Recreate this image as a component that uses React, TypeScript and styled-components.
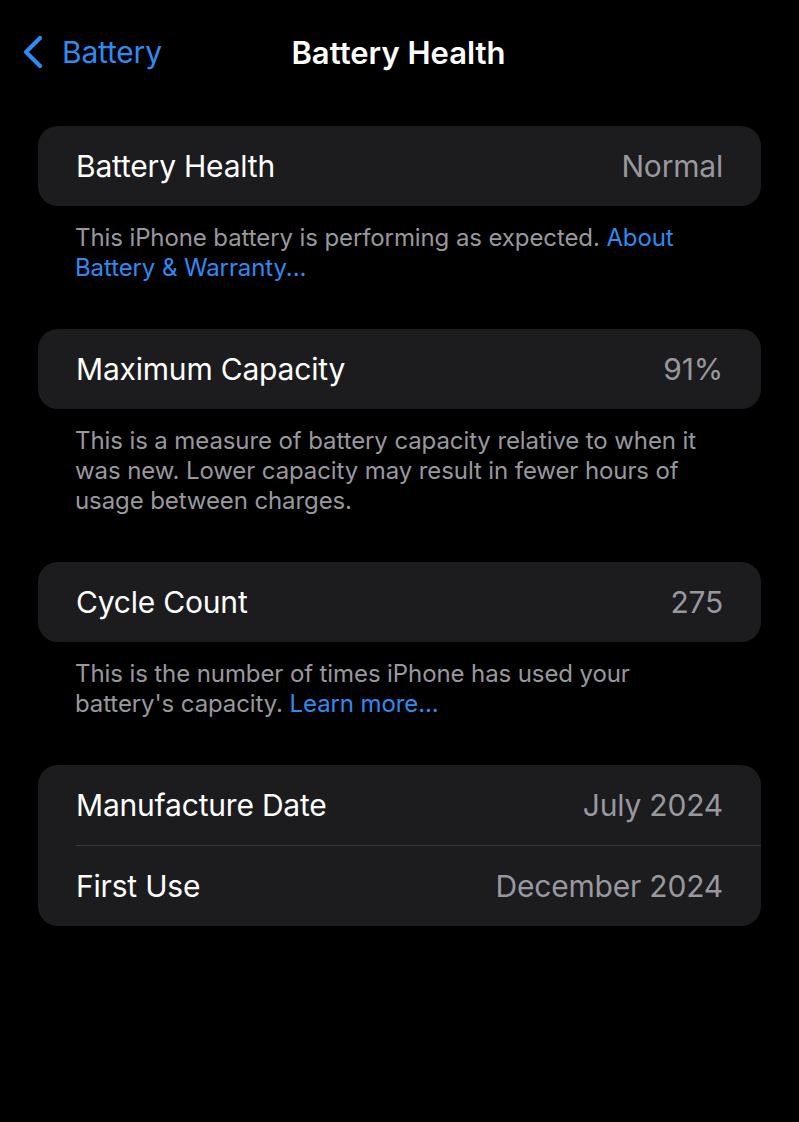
import styled, { createGlobalStyle } from 'styled-components';

const GlobalStyle = createGlobalStyle`
  html, body {
    margin: 0;
    padding: 0;
    background: #000;
  }
  body {
    font-family: Inter, "Noto Sans", "Liberation Sans", sans-serif;
    -webkit-font-smoothing: antialiased;
  }
`;

const Page = styled.div`
  background: #000;
  min-height: 1122px;
  box-sizing: border-box;
  padding: 0 38px;
`;

const NavBar = styled.header`
  align-items: center;
  display: grid;
  grid-template-columns: 1fr auto 1fr;
  height: 126px;
  margin: 0 -38px;
  padding: 0 24px 22px 22px;
  box-sizing: border-box;
`;

const BackButton = styled.a`
  align-items: center;
  color: #2f8bf2;
  display: flex;
  font-size: 30px;
  gap: 18px;
  letter-spacing: -0.2px;
  text-decoration: none;
`;

const Title = styled.h1`
  color: #fff;
  font-size: 31px;
  font-weight: 600;
  margin: 0;
`;

const Card = styled.section`
  background: #1c1c1e;
  border-radius: 20px;
  overflow: hidden;
`;

const Row = styled.div`
  align-items: center;
  display: flex;
  height: 80px;
  justify-content: space-between;
  padding: 0 38px;
  position: relative;

  & + & {
    height: 81px;
  }

  & + &::before {
    background: #38383a;
    content: '';
    height: 1px;
    left: 38px;
    position: absolute;
    right: 0;
    top: 0;
  }
`;

const Label = styled.span`
  color: #fff;
  font-size: 30px;
  letter-spacing: -0.2px;
`;

const Value = styled.span`
  color: #98989e;
  font-size: 30px;
  letter-spacing: -0.2px;
`;

const Footer = styled.p`
  color: #98989e;
  font-size: 24px;
  letter-spacing: -0.1px;
  line-height: 30px;
  margin: 0 0 46px;
  padding: 17px 38px 0 37px;
`;

const Link = styled.a`
  color: #2f8bf2;
  text-decoration: none;
`;

const Chevron = () => (
  <svg width="22" height="34" viewBox="0 0 22 34" fill="none">
    <path
      d="M18 3 L4 17 L18 31"
      stroke="#2f8bf2"
      strokeWidth="4.2"
      strokeLinecap="round"
      strokeLinejoin="round"
    />
  </svg>
);

const App = () => (
  <>
    <GlobalStyle />
    <Page>
      <NavBar>
        <BackButton href="#">
          <Chevron />
          Battery
        </BackButton>
        <Title>Battery Health</Title>
        <span />
      </NavBar>

      <Card>
        <Row>
          <Label>Battery Health</Label>
          <Value>Normal</Value>
        </Row>
      </Card>
      <Footer>
        This iPhone battery is performing as expected.{' '}
        <Link href="#">About Battery &amp; Warranty...</Link>
      </Footer>

      <Card>
        <Row>
          <Label>Maximum Capacity</Label>
          <Value>91%</Value>
        </Row>
      </Card>
      <Footer>
        This is a measure of battery capacity relative to when it was new. Lower capacity may
        result in fewer hours of usage between charges.
      </Footer>

      <Card>
        <Row>
          <Label>Cycle Count</Label>
          <Value>275</Value>
        </Row>
      </Card>
      <Footer>
        This is the number of times iPhone has used your battery's capacity.{' '}
        <Link href="#">Learn more...</Link>
      </Footer>

      <Card>
        <Row>
          <Label>Manufacture Date</Label>
          <Value>July 2024</Value>
        </Row>
        <Row>
          <Label>First Use</Label>
          <Value>December 2024</Value>
        </Row>
      </Card>
    </Page>
  </>
);

export default App;
